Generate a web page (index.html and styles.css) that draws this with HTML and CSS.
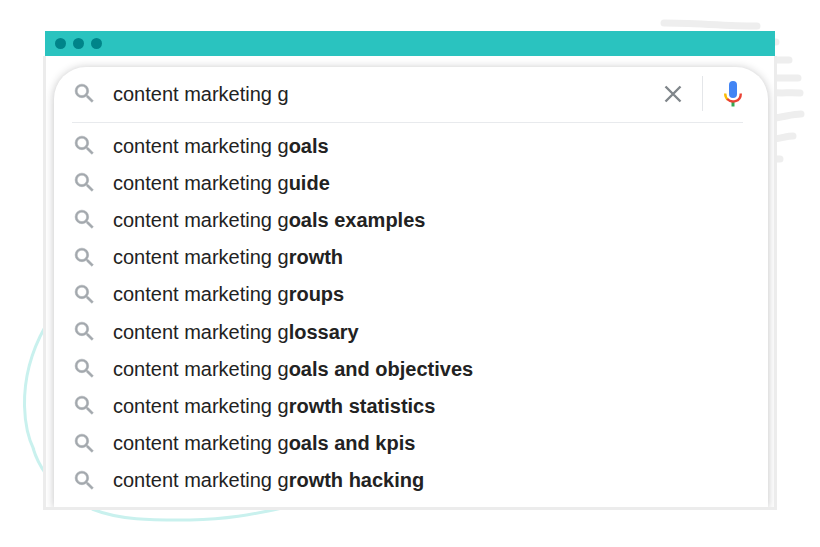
FILE: index.html
```html
<!DOCTYPE html>
<html lang="en">
<head>
<meta charset="utf-8">
<meta name="viewport" content="width=device-width, initial-scale=1">
<title>content marketing g</title>
<link rel="stylesheet" href="styles.css">
</head>
<body>
<svg class="defs" aria-hidden="true">
  <symbol id="lens" viewBox="0 0 24 24"><path d="M15.5 14h-.79l-.28-.27A6.471 6.471 0 0 0 16 9.5 6.5 6.5 0 1 0 9.5 16c1.61 0 3.09-.59 4.23-1.57l.27.28v.79l5 4.99L20.49 19l-4.99-5zm-6 0C7.01 14 5 11.99 5 9.5S7.01 5 9.5 5 14 7.01 14 9.5 11.99 14 9.5 14z"/></symbol>
</svg>
<main class="stage">
  <svg class="swoosh" viewBox="0 0 280 210" aria-hidden="true">
    <path d="M25 13C11 38 4 65 4.500 92c.500 18 4 33 9.500 44M13 134c3 10 7 18 13 26"/>
    <path d="M72 195c30 12 65 11 98 11 38-1 60-5 92-12"/>
  </svg>
  <svg class="strokes" viewBox="0 0 160 160" aria-hidden="true">
    <path d="M17 8C45 8 80 11 110 11M122 27h7M122 45h20M122 63L151 63M122 77C135 79 140 77 153 78M122 104C138 102 145 99 154 99M122 125C136 123 140 121 146 121M122 144h11"/>
  </svg>
  <div class="window">
    <div class="titlebar"><span class="dot"></span><span class="dot"></span><span class="dot"></span></div>
    <div class="content">
      <form class="card" role="search">
        <div class="searchbar">
          <svg class="lens" aria-hidden="true"><use href="#lens"/></svg>
          <input class="query" type="text" aria-label="Search" value="content marketing g">
          <button class="clear" type="button" aria-label="Clear">
            <svg viewBox="0 0 18 18" aria-hidden="true"><path d="M1.500 1.500l15 15M16.500 1.500l-15 15"/></svg>
          </button>
          <button class="voice" type="button" aria-label="Search by voice">
            <svg viewBox="0 0 18 26" aria-hidden="true">
              <rect x="5" y="0" width="8" height="17" rx="4" fill="#4285f4"/>
              <path d="M7.500 21h3v4.500h-3z" fill="#34a853"/>
              <path d="M1.200 12.500c0 3 1 4.800 2.700 6.200" stroke="#fbbc05"/>
              <path d="M3.200 18C7 22 16.800 21.500 16.800 12.500" stroke="#ea4335"/>
            </svg>
          </button>
        </div>
        <ul class="suggestions">
          <li><svg class="lens" aria-hidden="true"><use href="#lens"/></svg><span>content marketing g<b>oals</b></span></li>
          <li><svg class="lens" aria-hidden="true"><use href="#lens"/></svg><span>content marketing g<b>uide</b></span></li>
          <li><svg class="lens" aria-hidden="true"><use href="#lens"/></svg><span>content marketing g<b>oals examples</b></span></li>
          <li><svg class="lens" aria-hidden="true"><use href="#lens"/></svg><span>content marketing g<b>rowth</b></span></li>
          <li><svg class="lens" aria-hidden="true"><use href="#lens"/></svg><span>content marketing g<b>roups</b></span></li>
          <li><svg class="lens" aria-hidden="true"><use href="#lens"/></svg><span>content marketing g<b>lossary</b></span></li>
          <li><svg class="lens" aria-hidden="true"><use href="#lens"/></svg><span>content marketing g<b>oals and objectives</b></span></li>
          <li><svg class="lens" aria-hidden="true"><use href="#lens"/></svg><span>content marketing g<b>rowth statistics</b></span></li>
          <li><svg class="lens" aria-hidden="true"><use href="#lens"/></svg><span>content marketing g<b>oals and kpis</b></span></li>
          <li><svg class="lens" aria-hidden="true"><use href="#lens"/></svg><span>content marketing g<b>rowth hacking</b></span></li>
        </ul>
      </form>
    </div>
  </div>
</main>
</body>
</html>
```
FILE: styles.css
```css
* { box-sizing: border-box; }

body {
  margin: 0;
  background: #fff;
  color: #222;
  font-family: "Liberation Sans", Arial, sans-serif;
  font-size: 20px;
  line-height: 24px;
}

.defs { position: absolute; width: 0; height: 0; }

.stage {
  position: relative;
  margin: 31px 43px;
}

/* Decorative strokes behind the window */
.swoosh, .strokes { position: absolute; fill: none; }
.swoosh { left: -23px; bottom: -14px; width: 280px; height: 210px; stroke: #c9f1ee; stroke-width: 3; }
.strokes { right: -30px; top: -16px; width: 160px; height: 160px; stroke: #eee; stroke-width: 7; stroke-linecap: round; }

.window { position: relative; }

.titlebar {
  display: flex;
  align-items: center;
  gap: 7px;
  height: 25px;
  margin: 0 2px;
  padding: 0 10px;
  background: #2ac3bf;
}
.dot { width: 11px; height: 11px; border-radius: 50%; background: #008489; }

.content {
  overflow: hidden;
  padding: 11px 6px 0 8px;
  border: 3px solid #ececec;
  border-top: 0;
  background: #fff;
}

.card {
  border-radius: 32px 32px 0 0;
  background: #fff;
  box-shadow: 0 1px 8px rgba(32, 33, 36, .28);
}

.searchbar {
  display: flex;
  align-items: center;
  height: 56px;
  margin: 0 25px 0 18px;
  padding-bottom: 2px;
  border-bottom: 1px solid #e8eaed;
}

.lens { flex: none; width: 25px; height: 25px; fill: #a3a8ad; stroke: #a3a8ad; stroke-width: 0.5; }

.query {
  flex: 1;
  min-width: 0;
  margin-left: 16px;
  padding: 0;
  border: 0;
  outline: 0;
  background: none;
  color: #222;
  font: inherit;
}

.clear, .voice {
  display: flex;
  align-items: center;
  height: 35px;
  padding: 0;
  border: 0;
  background: none;
}
.clear { padding-right: 20px; border-right: 1px solid #e4e6e9; }
.clear svg { width: 18px; height: 18px; fill: none; stroke: #80868b; stroke-width: 2.4; }
.voice { padding: 0 1px 0 21px; }
.voice svg { width: 18px; height: 26px; fill: none; stroke-width: 2.4; }

.suggestions {
  display: grid;
  grid-auto-rows: 1fr;
  min-height: 384px;
  margin: 0;
  padding: 4px 18px 8px;
  list-style: none;
}
.suggestions li { display: flex; align-items: center; gap: 16px; }
```
